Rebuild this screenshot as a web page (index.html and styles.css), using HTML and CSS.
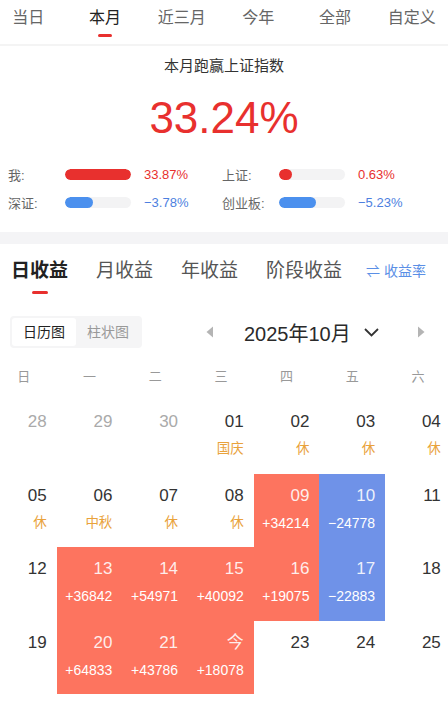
FILE: index.html
```html
<!DOCTYPE html>
<html lang="zh-CN">

<head>
    <meta charset="UTF-8">
    <meta name="viewport" content="width=device-width, initial-scale=1.0">
    <title>收益日历</title>
    <link rel="stylesheet" href="styles.css">
</head>

<body>
    <!-- 상단 기간 탭 -->
    <ul class="period_tabs">
        <li>当日</li>
        <li class="on">本月<span class="bar"></span></li>
        <li>近三月</li>
        <li>今年</li>
        <li>全部</li>
        <li>自定义</li>
    </ul>

    <div class="summary">
        <p class="sum_title">本月跑赢上证指数</p>
        <p class="sum_num">33.24%</p>
        <div class="stats">
            <div class="stat">
                <span class="stat_label">我:</span>
                <span class="track"><i class="fill red" style="width:100%"></i></span>
                <span class="stat_val up">33.87%</span>
            </div>
            <div class="stat">
                <span class="stat_label">上证:</span>
                <span class="track"><i class="fill red" style="width:20%"></i></span>
                <span class="stat_val up">0.63%</span>
            </div>
            <div class="stat">
                <span class="stat_label">深证:</span>
                <span class="track"><i class="fill blue" style="width:43%"></i></span>
                <span class="stat_val down">−3.78%</span>
            </div>
            <div class="stat">
                <span class="stat_label">创业板:</span>
                <span class="track"><i class="fill blue" style="width:56%"></i></span>
                <span class="stat_val down">−5.23%</span>
            </div>
        </div>
    </div>

    <div class="gap_band"></div>

    <div class="profit_tabs">
        <span class="ptab on">日收益<span class="bar"></span></span>
        <span class="ptab">月收益</span>
        <span class="ptab">年收益</span>
        <span class="ptab">阶段收益</span>
        <span class="rate">⇌ 收益率</span>
    </div>

    <div class="toolbar">
        <div class="switch">
            <span class="sw on">日历图</span>
            <span class="sw">柱状图</span>
        </div>
        <div class="month_nav">
            <svg class="arrow" width="8" height="12" viewBox="0 0 8 12"><path d="M7 0.5 L0.5 6 L7 11.5 Z" fill="#b4b4b4"/></svg>
            <span class="month">2025年10月</span>
            <svg class="chev" width="15" height="9" viewBox="0 0 15 9"><path d="M1 1 L7.5 7.5 L14 1" fill="none" stroke="#333" stroke-width="1.8"/></svg>
            <svg class="arrow right" width="8" height="12" viewBox="0 0 8 12"><path d="M1 0.5 L7.5 6 L1 11.5 Z" fill="#b4b4b4"/></svg>
        </div>
    </div>

    <div class="calendar">
        <div class="week">日</div>
        <div class="week">一</div>
        <div class="week">二</div>
        <div class="week">三</div>
        <div class="week">四</div>
        <div class="week">五</div>
        <div class="week">六</div>
    </div>

    <div class="calendar days">
        <div class="day prev"><b>28</b></div>
        <div class="day prev"><b>29</b></div>
        <div class="day prev"><b>30</b></div>
        <div class="day"><b>01</b><em>国庆</em></div>
        <div class="day"><b>02</b><em>休</em></div>
        <div class="day"><b>03</b><em>休</em></div>
        <div class="day"><b>04</b><em>休</em></div>

        <div class="day"><b>05</b><em>休</em></div>
        <div class="day"><b>06</b><em>中秋</em></div>
        <div class="day"><b>07</b><em>休</em></div>
        <div class="day"><b>08</b><em>休</em></div>
        <div class="day gain"><b>09</b><span>+34214</span></div>
        <div class="day loss"><b>10</b><span>−24778</span></div>
        <div class="day"><b>11</b></div>

        <div class="day"><b>12</b></div>
        <div class="day gain"><b>13</b><span>+36842</span></div>
        <div class="day gain"><b>14</b><span>+54971</span></div>
        <div class="day gain"><b>15</b><span>+40092</span></div>
        <div class="day gain"><b>16</b><span>+19075</span></div>
        <div class="day loss"><b>17</b><span>−22883</span></div>
        <div class="day"><b>18</b></div>

        <div class="day"><b>19</b></div>
        <div class="day gain"><b>20</b><span>+64833</span></div>
        <div class="day gain"><b>21</b><span>+43786</span></div>
        <div class="day gain"><b>今</b><span>+18078</span></div>
        <div class="day"><b>23</b></div>
        <div class="day"><b>24</b></div>
        <div class="day"><b>25</b></div>
    </div>
</body>

</html>
```

FILE: styles.css
```css
* {
    margin: 0;
    padding: 0;
    box-sizing: border-box;
}

body {
    width: 448px;
    height: 707px;
    overflow: hidden;
    background: #fff;
    font-family: "Liberation Sans", "Noto Sans CJK SC", sans-serif;
    color: #333;
}

li {
    list-style: none;
}

/* 상단 탭 */
.period_tabs {
    display: flex;
    width: 460px;
    height: 46px;
    margin-left: -10px;
    border-bottom: 2px solid #f4f4f4;
}

.period_tabs li {
    flex: 1;
    text-align: center;
    padding-top: 8px;
    font-size: 16px;
    line-height: 20px;
    color: #666;
}

.period_tabs li.on {
    color: #222;
}

.bar {
    display: block;
    width: 14px;
    height: 3px;
    margin: 6px auto 0;
    border-radius: 2px;
    background: #e8302e;
}

.summary {
    padding: 9px 0 16px;
}

.sum_title {
    text-align: center;
    font-size: 15px;
    line-height: 22px;
    color: #333;
}

.sum_num {
    margin-top: 13px;
    text-align: center;
    font-size: 44px;
    line-height: 56px;
    color: #e8302e;
}

.stats {
    display: grid;
    grid-template-columns: 214px 1fr;
    margin-top: 14px;
    padding-left: 8px;
}

.stat {
    display: flex;
    align-items: center;
    height: 28px;
    font-size: 13px;
}

.stat_label {
    width: 57px;
    color: #666;
}

.track {
    display: block;
    width: 66px;
    height: 11px;
    border-radius: 6px;
    background: #f3f3f4;
    overflow: hidden;
}

.fill {
    display: block;
    height: 100%;
    border-radius: 6px;
}

.fill.red {
    background: #e8302e;
}

.fill.blue {
    background: #4b90ee;
}

.stat_val {
    margin-left: 13px;
}

.up {
    color: #e8302e;
}

.down {
    color: #4d7fe0;
}

.gap_band {
    height: 12px;
    background: #f4f4f6;
}

/* 수익 탭 */
.profit_tabs {
    display: flex;
    align-items: flex-start;
    height: 50px;
    padding: 14px 0 0 11px;
}

.ptab {
    margin-right: 28px;
    font-size: 19px;
    line-height: 26px;
    color: #555;
}

.ptab.on {
    font-weight: bold;
    color: #222;
}

.ptab .bar {
    width: 16px;
    margin-top: 7px;
}

.rate {
    margin-left: -4px;
    font-size: 14px;
    line-height: 26px;
    color: #5b8fe6;
}

.toolbar {
    display: flex;
    align-items: center;
    margin-top: 22px;
    padding-left: 10px;
}

.switch {
    display: flex;
    padding: 2px;
    border-radius: 4px;
    background: #f5f5f6;
}

.sw {
    width: 64px;
    height: 28px;
    line-height: 28px;
    text-align: center;
    font-size: 14px;
    color: #999;
}

.sw.on {
    background: #fff;
    border-radius: 3px;
    color: #222;
}

.month_nav {
    display: flex;
    align-items: center;
    margin-left: 64px;
}

.month {
    margin-left: 30px;
    font-size: 20px;
    color: #2a2a2a;
}

.chev {
    margin-left: 13px;
}

.arrow.right {
    margin-left: 38px;
}

/* 달력 */
.calendar {
    display: grid;
    grid-template-columns: repeat(7, 65.7px);
    margin-left: -9px;
}

.week {
    margin-top: 18px;
    height: 22px;
    line-height: 22px;
    text-align: center;
    font-size: 13px;
    color: #999;
}

.days {
    margin-top: 12px;
}

.day {
    height: 73.5px;
    padding: 11px 10px 0 0;
    text-align: right;
}

.day b {
    display: block;
    font-weight: normal;
    font-size: 17px;
    line-height: 22px;
    color: #333;
}

.day em {
    display: block;
    margin-top: 7px;
    font-style: normal;
    font-size: 13.5px;
    line-height: 18px;
    color: #e9a23b;
}

.day span {
    display: block;
    margin-top: 7px;
    font-size: 14px;
    line-height: 18px;
    color: #fff;
}

.day.prev b {
    color: #aaa;
}

.day.gain {
    background: #fd745f;
}

.day.loss {
    background: #6f92e8;
}

.day.gain b,
.day.loss b {
    color: rgba(255, 255, 255, 0.88);
}
```
